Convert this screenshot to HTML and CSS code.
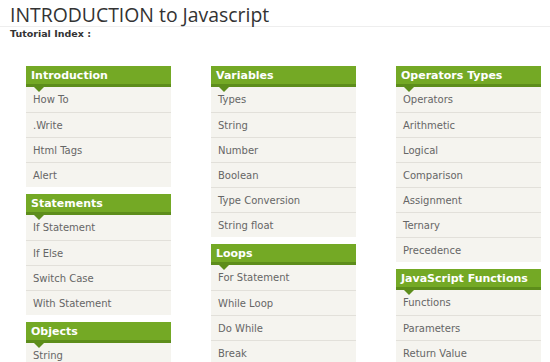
FILE: index.html
```html
<!doctype html>
<html lang="en">
<head>
	<meta charset="UTF-8">
	<title>INTRODUCTION to Javascript</title>
	<link rel="stylesheet" href="styles.css">
</head>
<body>
	<h1 class="title">INTRODUCTION to Javascript</h1>
	<p class="subtitle">Tutorial Index :</p>
	<div class="index">
		<div class="col">
			<div class="box">
				<div class="box-head">Introduction</div>
				<ul class="box-list">
					<li>How To</li>
					<li>.Write</li>
					<li>Html Tags</li>
					<li>Alert</li>
				</ul>
			</div>
			<div class="box">
				<div class="box-head">Statements</div>
				<ul class="box-list">
					<li>If Statement</li>
					<li>If Else</li>
					<li>Switch Case</li>
					<li>With Statement</li>
				</ul>
			</div>
			<div class="box">
				<div class="box-head">Objects</div>
				<ul class="box-list">
					<li>String</li>
				</ul>
			</div>
		</div>
		<div class="col">
			<div class="box">
				<div class="box-head">Variables</div>
				<ul class="box-list">
					<li>Types</li>
					<li>String</li>
					<li>Number</li>
					<li>Boolean</li>
					<li>Type Conversion</li>
					<li>String float</li>
				</ul>
			</div>
			<div class="box">
				<div class="box-head">Loops</div>
				<ul class="box-list">
					<li>For Statement</li>
					<li>While Loop</li>
					<li>Do While</li>
					<li>Break</li>
				</ul>
			</div>
		</div>
		<div class="col">
			<div class="box">
				<div class="box-head">Operators Types</div>
				<ul class="box-list">
					<li>Operators</li>
					<li>Arithmetic</li>
					<li>Logical</li>
					<li>Comparison</li>
					<li>Assignment</li>
					<li>Ternary</li>
					<li>Precedence</li>
				</ul>
			</div>
			<div class="box">
				<div class="box-head">JavaScript Functions</div>
				<ul class="box-list">
					<li>Functions</li>
					<li>Parameters</li>
					<li>Return Value</li>
				</ul>
			</div>
		</div>
	</div>
</body>
</html>
```
FILE: styles.css
```css
body{
	margin: 0;
	background: #fff;
	font-family: "DejaVu Sans", Verdana, sans-serif;
	overflow: hidden;
}
.title{
	margin: 0;
	padding: 3px 10px 0;
	height: 23px;
	font-family: "Open Sans", sans-serif;
	font-weight: normal;
	font-size: 19.4px;
	line-height: 23px;
	color: #333;
	border-bottom: 1px solid #eee;
}
.subtitle{
	margin: 0;
	padding: 0 10px;
	font-size: 9.5px;
	font-weight: bold;
	line-height: 14px;
	color: #333;
}
.index{
	display: grid;
	grid-template-columns: repeat(3, 145px);
	column-gap: 40px;
	align-items: start;
	padding: 25px 0 0 26px;
}
.col{
	display: flex;
	flex-direction: column;
	gap: 7px;
}
.box{
	background: #f5f4ef;
}
.box-head{
	position: relative;
	height: 18px;
	padding: 0 5px;
	background: #74a925;
	border-bottom: 3px solid #5d8d1b;
	color: #fff;
	font-size: 11px;
	font-weight: bold;
	line-height: 19px;
}
.box-head:after{
	content: "";
	position: absolute;
	left: 8px;
	top: 21px;
	border-left: 5px solid transparent;
	border-right: 5px solid transparent;
	border-top: 5px solid #5d8d1b;
}
.box-list{
	list-style: none;
	margin: 0;
	padding: 0;
}
.box-list li{
	height: 24px;
	padding: 0 7px;
	border-top: 1px solid #e2e0da;
	font-size: 10px;
	line-height: 25px;
	color: #666;
}
.box-list li:first-child{
	height: 25px;
	border-top: 0;
}
```
